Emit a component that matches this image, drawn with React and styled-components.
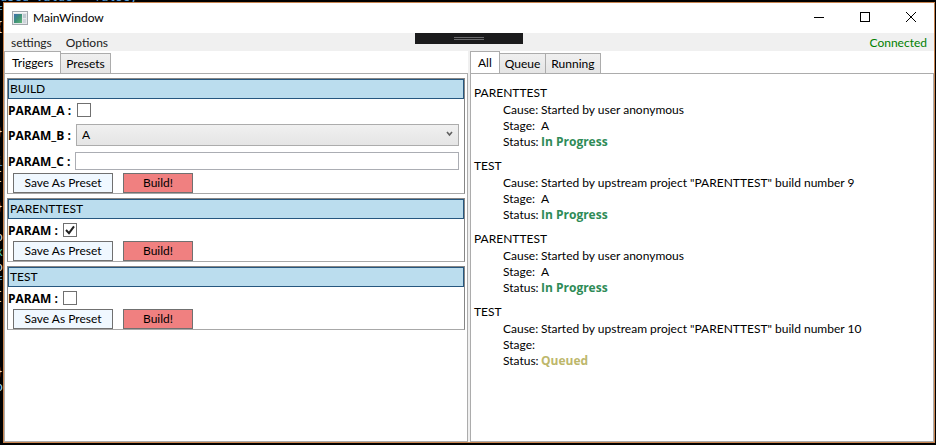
import React, { useState } from "react";
import styled, { createGlobalStyle, css } from "styled-components";

const GlobalStyle = createGlobalStyle`
  *, *::before, *::after { box-sizing: border-box; }
  body { margin: 0; background: #000; }
  button, input, select { font: inherit; color: inherit; margin: 0; }
`;

const Desktop = styled.div`
  display: grid;
  grid-template-columns: 3px minmax(0, 1fr) 1px;
  grid-template-rows: 2px minmax(0, 1fr) 2px;
  min-height: 100vh;
  background: #000;
  color: #000;
  font: 12px/16px Lato, "Open Sans", sans-serif;
`;

const CodeStrip = styled.div`
  grid-column: 1 / -1;
  display: flex;
  align-items: flex-end;
  overflow: hidden;
  height: 2px;
  white-space: pre;
  color: #569cd6;
  font: 12px/10px "DejaVu Sans Mono", monospace;
`;

const CodeGutter = styled.div`
  display: flex;
  flex-direction: column;
  align-items: flex-end;
  overflow: hidden;
  padding-top: 3px;
  height: 0;
  min-height: 100%;
  font: 12px/15px "DejaVu Sans Mono", monospace;
`;

const CodeLine = styled.span`
  height: 15px;
  flex: none;
  color: ${(p) => p.$color};
`;

const Window = styled.main`
  position: relative;
  grid-column: 2;
  display: flex;
  flex-direction: column;
  border: 1px solid #c8844f;
  background: #fff;
`;

const TitleBar = styled.header`
  display: flex;
  align-items: center;
  height: 30px;
  padding-left: 8px;
`;

const Title = styled.h1`
  flex: 1;
  margin: 0 0 0 5px;
  font-size: 12px;
  font-weight: 400;
`;

const CaptionButton = styled.button`
  display: grid;
  place-items: center;
  width: 46px;
  height: 30px;
  padding: 0 0 2px;
  border: 0;
  background: transparent;
`;

const MenuBar = styled.nav`
  display: flex;
  align-items: center;
  height: 18px;
  padding: 2px 7px 0;
  gap: 14px;
  background: #f0f0f0;
`;

const MenuItem = styled.button`
  padding: 0;
  border: 0;
  background: transparent;
  color: #212121;
`;

const Connection = styled.span`
  margin-left: auto;
  color: #008000;
`;

const DragHandle = styled.div`
  position: absolute;
  top: 30px;
  left: 50%;
  transform: translateX(-50%);
  display: flex;
  flex-direction: column;
  align-items: center;
  gap: 1px;
  width: 108px;
  height: 11px;
  padding-top: 4px;
  background: #1b1b1c;
`;

const Grip = styled.span`
  width: 30px;
  height: 1px;
  background: #6a6a6c;
`;

const Panes = styled.div`
  flex: 1;
  display: grid;
  grid-template-columns: minmax(0, 1fr) minmax(0, 1fr);
  gap: 2px;
  background: #f0f0f0;
`;

const Pane = styled.section`
  display: flex;
  flex-direction: column;
  background: #fff;
`;

const TabList = styled.div`
  display: flex;
  align-items: flex-end;
  height: 23px;
  margin-bottom: -1px;
`;

const Tab = styled.button`
  height: 21px;
  padding: 0 5px;
  border: 1px solid #acacac;
  border-left-width: 0;
  background: linear-gradient(#f0f0f0, #e5e5e5);
  ${(p) =>
    p.$active &&
    css`
      height: 23px;
      padding: 0 7px;
      border-left-width: 1px;
      border-bottom: 0;
      background: #fff;
    `}
`;

const TabBody = styled.div`
  flex: 1;
  border: 1px solid #acacac;
  padding: ${(p) => p.$pad};
`;

const JobList = styled.div`
  display: flex;
  flex-direction: column;
  gap: 4px;
`;

const JobCard = styled.form`
  border: 1px solid #868686;
  border-bottom-color: #a8a8a8;
`;

const JobName = styled.h2`
  height: 20px;
  margin: 0;
  padding: 0 1px;
  border: 1px solid #26577f;
  background: #bbddee;
  font-size: 12px;
  line-height: 18px;
  font-weight: 400;
`;

const Field = styled.div`
  display: flex;
  align-items: center;
  gap: 5px;
  min-height: ${(p) => p.$height};
  padding-right: 5px;
`;

const FieldLabel = styled.label`
  flex: none;
  min-width: ${(p) => p.$width};
  padding-top: 1px;
  font-family: "Open Sans", sans-serif;
  font-weight: 700;
`;

const Stack = styled.span`
  display: grid;
  align-items: center;
  flex: ${(p) => (p.$grow ? 1 : "none")};
  > * { grid-area: 1 / 1; }
  > svg { pointer-events: none; justify-self: ${(p) => (p.$grow ? "end" : "center")}; }
`;

const CheckBox = styled.input`
  appearance: none;
  width: 14px;
  height: 14px;
  border: 1px solid #707070;
  background: #fff;
`;

const Select = styled.select`
  appearance: none;
  width: 100%;
  height: 22px;
  padding: 0 5px;
  border: 1px solid #acacac;
  border-radius: 0;
  background: linear-gradient(#f0f0f0, #e5e5e5);
`;

const TextBox = styled.input`
  flex: 1;
  min-width: 0;
  height: 18px;
  padding: 0 4px;
  border: 1px solid #abadb3;
  background: #fff;
`;

const Actions = styled.div`
  display: flex;
  gap: 10px;
  padding-left: 5px;
`;

const ActionButton = styled.button`
  width: ${(p) => (p.$primary ? "70px" : "100px")};
  height: 20px;
  padding: 0;
  border: 1px solid #707070;
  background: ${(p) => (p.$primary ? "#f08080" : "#f0f8ff")};
`;

const BuildItem = styled.article`
  margin-bottom: 8px;
`;

const BuildName = styled.h2`
  margin: 0 0 1px;
  font-size: 12px;
  font-weight: 400;
`;

const Details = styled.dl`
  display: grid;
  grid-template-columns: 38px 1fr;
  grid-auto-rows: 16px;
  margin: 0 0 0 29px;
  white-space: nowrap;
`;

const Term = styled.dt``;

const Value = styled.dd`
  margin: 0;
`;

const Status = styled.strong`
  font-family: "Open Sans", sans-serif;
  font-weight: 700;
  color: ${(p) => (p.$queued ? "#bdb76b" : "#2e8b57")};
`;

const GUTTER = [
  ["f", "#569cd6"], ["{", "#dcdcdc"], "", "", "", "", "", "",
  ["}", "#dcdcdc"], "", ["i", "#569cd6"], ["[", "#dcdcdc"], "",
  ["}", "#dcdcdc"], "", ["o", "#dcdcdc"], ["x", "#4ec9b0"],
  ["o", "#dcdcdc"], ["f", "#569cd6"], ["[", "#dcdcdc"], "", "", "", "",
  ["}", "#dcdcdc"], ["o", "#9cdcfe"],
];

const JOBS = [
  {
    name: "BUILD",
    params: [
      { name: "PARAM_A", type: "check", value: false },
      { name: "PARAM_B", type: "choice", options: ["A"] },
      { name: "PARAM_C", type: "text" },
    ],
  },
  { name: "PARENTTEST", params: [{ name: "PARAM", type: "check", value: true }] },
  { name: "TEST", params: [{ name: "PARAM", type: "check", value: false }] },
];

const BUILDS = [
  { name: "PARENTTEST", cause: "Started by user anonymous", stage: "A", status: "In Progress" },
  { name: "TEST", cause: 'Started by upstream project "PARENTTEST" build number 9', stage: "A", status: "In Progress" },
  { name: "PARENTTEST", cause: "Started by user anonymous", stage: "A", status: "In Progress" },
  { name: "TEST", cause: 'Started by upstream project "PARENTTEST" build number 10', stage: "", status: "Queued" },
];

const FIELD_HEIGHT = { check: "22px", choice: "28px", text: "24px" };

function AppIcon() {
  return (
    <svg width="16" height="14" viewBox="0 0 16 14" aria-hidden="true">
      <defs>
        <linearGradient id="screen" x1="0" y1="0" x2="1" y2="1">
          <stop offset="0" stopColor="#3c6fb0" />
          <stop offset="0.5" stopColor="#3f9078" />
          <stop offset="1" stopColor="#63b878" />
        </linearGradient>
      </defs>
      <rect x="0.5" y="0.5" width="15" height="13" fill="#e4e7ea" stroke="#a2a8ad" />
      <rect x="2" y="3" width="8" height="9" fill="url(#screen)" />
      <rect x="11" y="3" width="3" height="4" fill="#bfc8d0" />
      <rect x="11" y="8" width="3" height="4" fill="#cdd4da" />
      <path d="M1 1.5H15" stroke="#f6f7f8" />
    </svg>
  );
}

function Check({ id, initial }) {
  const [on, setOn] = useState(initial);
  return (
    <Stack>
      <CheckBox id={id} type="checkbox" checked={on} onChange={() => setOn(!on)} />
      {on && (
        <svg width="10" height="10" viewBox="0 0 10 10" aria-hidden="true">
          <path d="M1 5L4 8.2L9 1.4" fill="none" stroke="#212121" strokeWidth="2" />
        </svg>
      )}
    </Stack>
  );
}

function Param({ id, param }) {
  return (
    <Field $height={FIELD_HEIGHT[param.type]}>
      <FieldLabel
        htmlFor={id}
        $width={param.type !== "check" ? "62px" : param.name === "PARAM" ? "50px" : "64px"}
      >
        {param.name} :
      </FieldLabel>
      {param.type === "check" && <Check id={id} initial={param.value} />}
      {param.type === "choice" && (
        <Stack $grow>
          <Select id={id}>
            {param.options.map((o) => <option key={o}>{o}</option>)}
          </Select>
          <svg width="16" height="8" viewBox="0 0 16 8" aria-hidden="true">
            <path d="M4 1L6.5 4L9 1" fill="none" stroke="#606060" strokeWidth="1.6" />
          </svg>
        </Stack>
      )}
      {param.type === "text" && <TextBox id={id} type="text" />}
    </Field>
  );
}

function Tabs({ names }) {
  return (
    <TabList role="tablist">
      {names.map((n, i) => (
        <Tab key={n} type="button" role="tab" aria-selected={i === 0} $active={i === 0}>{n}</Tab>
      ))}
    </TabList>
  );
}

export default function App() {
  return (
    <Desktop>
      <GlobalStyle />
      <CodeStrip aria-hidden="true">used value = false;</CodeStrip>
      <CodeGutter aria-hidden="true">
        {GUTTER.map((g, i) => <CodeLine key={i} $color={g[1]}>{g[0]}</CodeLine>)}
      </CodeGutter>
      <Window>
        <TitleBar>
          <AppIcon />
          <Title>MainWindow</Title>
          <CaptionButton type="button" aria-label="Minimize">
            <svg width="10" height="10"><path d="M0 5.5H10" stroke="#000" /></svg>
          </CaptionButton>
          <CaptionButton type="button" aria-label="Maximize">
            <svg width="10" height="10"><rect x="0.5" y="0.5" width="9" height="9" fill="none" stroke="#000" /></svg>
          </CaptionButton>
          <CaptionButton type="button" aria-label="Close">
            <svg width="10" height="10"><path d="M0 0L10 10M10 0L0 10" stroke="#000" /></svg>
          </CaptionButton>
        </TitleBar>
        <MenuBar>
          <MenuItem type="button">settings</MenuItem>
          <MenuItem type="button">Options</MenuItem>
          <Connection>Connected</Connection>
        </MenuBar>
        <DragHandle aria-hidden="true"><Grip /><Grip /></DragHandle>
        <Panes>
          <Pane>
            <Tabs names={["Triggers", "Presets"]} />
            <TabBody $pad="4px 2px">
              <JobList>
                {JOBS.map((job) => (
                  <JobCard key={job.name} onSubmit={(e) => e.preventDefault()}>
                    <JobName>{job.name}</JobName>
                    {job.params.map((p) => (
                      <Param key={p.name} id={`${job.name}-${p.name}`} param={p} />
                    ))}
                    <Actions>
                      <ActionButton type="button">Save As Preset</ActionButton>
                      <ActionButton type="submit" $primary>Build!</ActionButton>
                    </Actions>
                  </JobCard>
                ))}
              </JobList>
            </TabBody>
          </Pane>
          <Pane>
            <Tabs names={["All", "Queue", "Running"]} />
            <TabBody $pad="11px 3px 0">
              {BUILDS.map((b, i) => (
                <BuildItem key={i}>
                  <BuildName>{b.name}</BuildName>
                  <Details>
                    <Term>Cause:</Term>
                    <Value>{b.cause}</Value>
                    <Term>Stage:</Term>
                    <Value>{b.stage}</Value>
                    <Term>Status:</Term>
                    <Value><Status $queued={b.status === "Queued"}>{b.status}</Status></Value>
                  </Details>
                </BuildItem>
              ))}
            </TabBody>
          </Pane>
        </Panes>
      </Window>
    </Desktop>
  );
}
